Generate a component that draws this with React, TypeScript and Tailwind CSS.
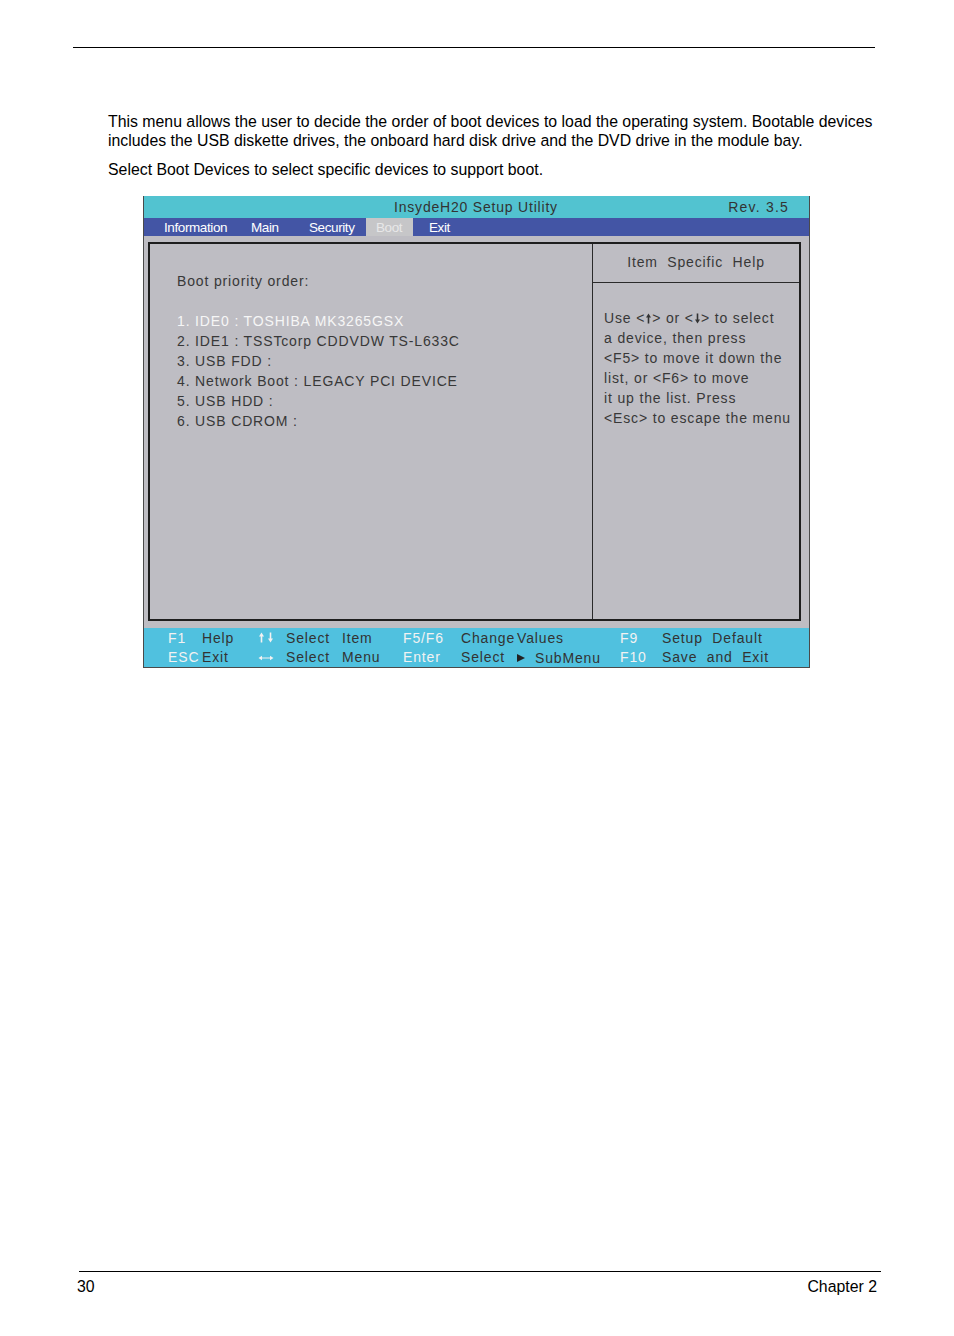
import React from 'react'

const bootOrder = [
  '1. IDE0 : TOSHIBA MK3265GSX',
  '2. IDE1 : TSSTcorp CDDVDW TS-L633C',
  '3. USB FDD :',
  '4. Network Boot : LEGACY PCI DEVICE',
  '5. USB HDD :',
  '6. USB CDROM :',
]

function ArrowUp({ color = '#333' }: { color?: string }) {
  return (
    <svg width="5" height="11" viewBox="0 0 5 11" className="inline-block mx-[1px] -mt-[2px] align-middle">
      <path d="M2.5 0.5 L0 4.5 H1.7 V10.5 H3.3 V4.5 H5 Z" fill={color} />
    </svg>
  )
}

function ArrowDown({ color = '#333' }: { color?: string }) {
  return (
    <svg width="5" height="11" viewBox="0 0 5 11" className="inline-block mx-[1px] -mt-[2px] align-middle">
      <path d="M2.5 10.5 L0 6.5 H1.7 V0.5 H3.3 V6.5 H5 Z" fill={color} />
    </svg>
  )
}

function LeftRight() {
  return (
    <svg width="16" height="6" viewBox="0 0 16 6" className="inline-block">
      <path d="M0.5 3 L4 0.8 V2.4 H12 V0.8 L15.5 3 L12 5.2 V3.6 H4 V5.2 Z" fill="#f2f2f2" />
    </svg>
  )
}

function Key({ children }: { children: React.ReactNode }) {
  return <span className="text-[#f2f2f2]">{children}</span>
}

function BiosScreen() {
  return (
    <div className="w-[667px] ml-[143px] mt-[17px] border-x border-b border-[#4a4a4a] font-['Liberation_Sans',Arial,sans-serif] text-[14px]">
      {/* title */}
      <div className="h-[22px] bg-[#52c3d0] flex items-center text-[#333] tracking-[0.8px]">
        <span className="ml-[250px]">InsydeH20 Setup Utility</span>
        <span className="ml-auto mr-[20px] tracking-[1.2px]">Rev. 3.5</span>
      </div>
      {/* menu bar */}
      <div className="h-[18px] bg-[#4355a5] flex text-white text-[13.5px] leading-[19px] tracking-[-0.4px] pl-[20px]">
        <span className="w-[87px]">Information</span>
        <span className="w-[58px]">Main</span>
        <span className="w-[57px]">Security</span>
        <span className="w-[47px] pl-[10px] bg-[#c6c6c8] text-[#e8e8e8]">Boot</span>
        <span className="ml-[16px]">Exit</span>
      </div>
      {/* body */}
      <div className="bg-[#bebdc3] h-[392px] pt-[6px] pl-[4px] pr-[8px] pb-[7px]">
        <div className="h-full border-2 border-[#1e1e1e] flex">
          <div className="w-[443px] border-r border-[#2a2a2a] pl-[27px] pt-[27px] text-[#383838] tracking-[0.85px] leading-[20px]">
            <div>Boot priority order:</div>
            <div className="h-[20px]" />
            {bootOrder.map((b, i) => (
              <div key={b} className={i === 0 ? 'text-[#f6f6f6]' : ''}>
                {b}
              </div>
            ))}
          </div>
          <div className="flex-1 flex flex-col text-[#383838] tracking-[0.85px]">
            <div className="h-[39px] pb-[1px] border-b border-[#2a2a2a] flex items-center justify-center whitespace-pre">
              Item  Specific  Help
            </div>
            <div className="pl-[11px] pt-[25px] leading-[20px]">
              <div>
                Use &lt;<ArrowUp />&gt; or &lt;<ArrowDown />&gt; to select
              </div>
              <div>a device, then press</div>
              <div>&lt;F5&gt; to move it down the</div>
              <div>list, or &lt;F6&gt; to move</div>
              <div>it up the list. Press</div>
              <div>&lt;Esc&gt; to escape the menu</div>
            </div>
          </div>
        </div>
      </div>
      {/* footer */}
      <div className="h-[39px] bg-[#50c1df] pl-[24px] pt-[1px] tracking-[0.85px] text-[#333] leading-[18px] grid grid-cols-[34px_56px_28px_56px_61px_58px_56px_103px_42px_1fr]">
        <Key>F1</Key>
        <span>Help</span>
        <span className="flex items-center">
          <ArrowUp color="#f2f2f2" />
          <span className="w-[2px]" />
          <ArrowDown color="#f2f2f2" />
        </span>
        <span>Select</span>
        <span>Item</span>
        <Key>F5/F6</Key>
        <span>Change</span>
        <span>Values</span>
        <Key>F9</Key>
        <span className="whitespace-pre">Setup  Default</span>

        <Key>ESC</Key>
        <span>Exit</span>
        <span className="flex items-center">
          <LeftRight />
        </span>
        <span>Select</span>
        <span>Menu</span>
        <Key>Enter</Key>
        <span>Select</span>
        <span className="flex items-center">
          <svg width="8" height="8" viewBox="0 0 8 8" className="mr-[10px]">
            <path d="M0 0 L8 4 L0 8 Z" fill="#222" />
          </svg>
          SubMenu
        </span>
        <Key>F10</Key>
        <span className="whitespace-pre">Save  and  Exit</span>
      </div>
    </div>
  )
}

export default function App() {
  return (
    <div className="w-[954px] h-[1336px] bg-white flex flex-col font-['Liberation_Sans',Arial,sans-serif] text-black text-[15.85px] leading-[19px]">
      <div className="mt-[47px] ml-[73px] w-[802px] h-px bg-black" />
      <div className="mt-[64px] ml-[108px] w-[790px]">
        <p>
          This menu allows the user to decide the order of boot devices to load the operating system. Bootable devices
          includes the USB diskette drives, the onboard hard disk drive and the DVD drive in the module bay.
        </p>
        <p className="mt-[10px]">Select Boot Devices to select specific devices to support boot.</p>
      </div>
      <BiosScreen />
      <div className="mt-auto pb-[40px]">
        <div className="ml-[79px] w-[802px] h-px bg-black" />
        <div className="mt-[5px] ml-[77px] w-[800px] flex justify-between">
          <span>30</span>
          <span>Chapter 2</span>
        </div>
      </div>
    </div>
  )
}
